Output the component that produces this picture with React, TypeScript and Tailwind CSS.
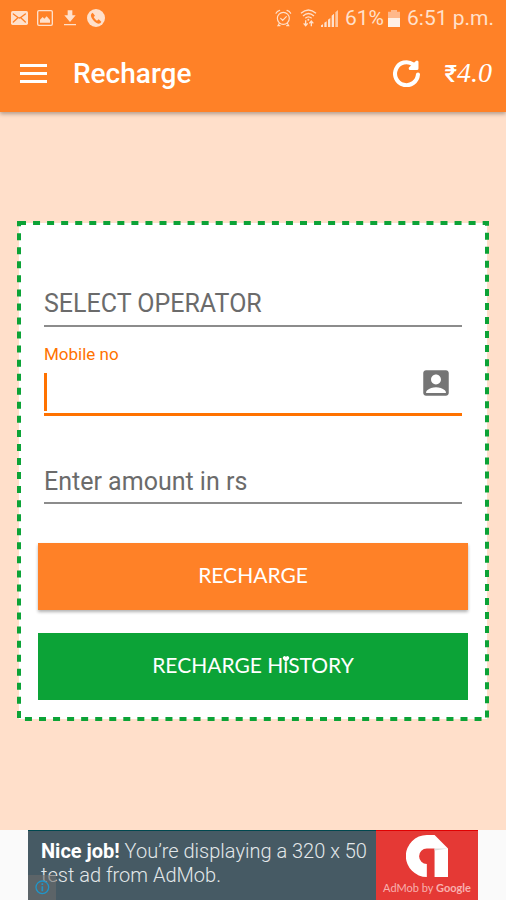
import React from "react";
import { MdAccountBox } from "react-icons/md";

function StatusBar() {
  return (
    <div className="flex items-center justify-between pl-[11px] pr-3 h-9 text-[#ffe0cb]">
      <div className="flex items-center gap-[9px]">
        {/* Mail */}
        <svg width="17" height="14" viewBox="0 0 51 42" aria-hidden="true">
          <rect width="51" height="42" rx="5" fill="currentColor" />
          <path
            d="M7 9 L20 19 Q25 23 30 19 L43 9 M7 33 L19 22 M43 33 L31 22"
            fill="none"
            stroke="#ff8127"
            strokeWidth="4"
            strokeLinecap="round"
          />
        </svg>
        {/* Picture */}
        <svg width="16" height="16" viewBox="0 0 48 48" aria-hidden="true">
          <rect x="2" y="2" width="44" height="44" rx="4" fill="none" stroke="currentColor" strokeWidth="4" />
          <path d="M9 38 V29 L17 21 L22 26 L29 19 L39 30 V38 Z" fill="currentColor" />
        </svg>
        {/* Download */}
        <svg width="16" height="16" viewBox="0 0 48 48" aria-hidden="true">
          <path d="M17 1 H31 V16 H41 L24 36 L7 16 H17 Z M6 42 H42 V46 H6 Z" fill="currentColor" />
        </svg>
        {/* Phone */}
        <svg width="18" height="18" viewBox="0 0 54 54" aria-hidden="true">
          <circle cx="27" cy="27" r="27" fill="currentColor" />
          <path
            d="M17 11 C11 15 10 19 14 27 C19 36 27 43 34 44 C38 44 42 41 43 38 L35 31 L30 35 C26 33 22 28 20 24 L24 20 Z"
            fill="#ff8127"
          />
        </svg>
      </div>

      <div className="flex items-center text-[21px] leading-6">
        {/* Alarm */}
        <svg width="17" height="18" viewBox="0 0 51 54" fill="none" stroke="currentColor" strokeWidth="3.5" strokeLinecap="round" aria-hidden="true">
          <circle cx="25" cy="28" r="18" />
          <path d="M17 28 L23 34 L34 23 M3 13 Q6 6 14 4 M47 13 Q44 6 36 4 M13 43 L9 50 H15 M37 43 L41 50 H35" />
        </svg>
        {/* Wi-Fi */}
        <svg className="ml-2" width="17" height="18" viewBox="0 0 51 54" fill="none" stroke="currentColor" strokeWidth="4" aria-hidden="true">
          <path d="M3 13 Q25 -7 48 13 M9 21 Q25 6 42 21 M16 28 Q25 19 35 28" />
          <path d="M17 34 V49 M11 43 L17 50 L23 43 M34 52 V37 M28 43 L34 36 L40 43" />
          <circle cx="25" cy="32" r="3" fill="currentColor" stroke="none" />
        </svg>
        {/* Signal */}
        <svg className="ml-1" width="17" height="17" viewBox="0 0 51 51" fill="currentColor" aria-hidden="true">
          <path d="M0 51 V46 L6 43 V51 Z M10 51 V38 L17 34 V51 Z M21 51 V29 L28 24 V51 Z M32 51 V17 L39 11 V51 Z" />
          <path d="M43 51 V7 L51 0 V51 Z" opacity=".75" />
        </svg>
        <span className="ml-[7px]">61%</span>
        {/* Battery */}
        <svg className="ml-1" width="12" height="17" viewBox="0 0 36 51" aria-hidden="true">
          <path d="M9 0 H27 V5 H36 V51 H0 V5 H9 Z" fill="#ffb88a" />
          <path d="M0 24 H36 V51 H0 Z" fill="#fff0e5" />
        </svg>
        <span className="ml-[7px]">6:51 p.m.</span>
      </div>
    </div>
  );
}

function Header() {
  return (
    <header className="relative bg-[#ff8127] text-white h-28 shadow-[0_2px_4px_rgba(0,0,0,0.3)]">
      <StatusBar />
      <div className="flex items-center h-[74px] pl-5 pr-[14px]">
        <button type="button" aria-label="Menu" className="flex flex-col gap-[5px]">
          <span className="w-[27px] h-[3px] bg-white" />
          <span className="w-[27px] h-[3px] bg-white" />
          <span className="w-[27px] h-[3px] bg-white" />
        </button>
        <h1 className="ml-[26px] pt-[2px] flex-1 text-[28px] leading-8 font-medium">Recharge</h1>
        <button type="button" aria-label="Refresh">
          <svg width="27" height="27" viewBox="0 0 80 80" aria-hidden="true">
            <path d="M74 43 A34 34 0 1 1 60 13" fill="none" stroke="currentColor" strokeWidth="12" strokeLinecap="round" />
            <path d="M71 6 V25 H51 Z" fill="currentColor" stroke="currentColor" strokeWidth="9" strokeLinejoin="round" />
          </svg>
        </button>
        <p className="ml-6 flex items-baseline leading-8">
          <span className="text-2xl font-medium">₹</span>
          <span className="text-[28px] italic font-['Liberation_Serif',serif]">4.0</span>
        </p>
      </div>
    </header>
  );
}

function RechargeForm() {
  return (
    <form
      className="relative w-full mx-[17px] px-[21px] pt-[62px] pb-[21px]"
      onSubmit={(e) => e.preventDefault()}
    >
      {/* Stitched border */}
      <svg className="absolute inset-0 w-full h-full" aria-hidden="true">
        <rect
          x="2"
          y="2"
          className="w-[calc(100%-4px)] h-[calc(100%-4px)]"
          fill="#fff"
          stroke="#0ca337"
          strokeWidth="4"
          strokeDasharray="7 7.05"
        />
      </svg>

      <div className="relative flex flex-col">
        <div className="flex flex-col px-[6px]">
          <select
            aria-label="Operator"
            className="appearance-none h-11 w-full bg-transparent border-b-2 border-[#8c8c8c] text-[25px] text-[#6b6b6b] outline-none"
          >
            <option>SELECT OPERATOR</option>
          </select>

          <label htmlFor="mobile" className="mt-[17px] text-[17px] leading-5 text-[#ff7200]">
            Mobile no
          </label>
          <div className="relative flex items-center">
            <input
              id="mobile"
              type="tel"
              className="h-[52px] w-full bg-transparent border-b-3 border-[#ff7200] pr-12 text-[25px] caret-transparent outline-none"
            />
            <span className="absolute left-0 top-[9px] bottom-[5px] w-[3px] bg-[#ff7200]" />
            <button
              type="button"
              aria-label="Contacts"
              className="absolute right-[9px] top-[2px] text-[#757575]"
            >
              <MdAccountBox size={34} />
            </button>
          </div>

          <input
            type="text"
            aria-label="Amount"
            placeholder="Enter amount in rs"
            className="mt-11 h-11 w-full bg-transparent border-b-2 border-[#8c8c8c] text-[25px] placeholder:text-[#6b6b6b] outline-none"
          />
        </div>

        <button
          type="submit"
          className="mt-[39px] h-[67px] pb-1 bg-[#ff8127] text-white text-[21px] font-['Lato',sans-serif] shadow-[0_2px_3px_rgba(0,0,0,0.3)]"
        >
          RECHARGE
        </button>
        <button
          type="button"
          className="mt-[23px] h-[67px] pb-1 bg-[#0ca337] text-white text-[21px] font-['Lato',sans-serif]"
        >
          RECHARGE H
          <span className="relative">
            i
            {/* Heart over the dot */}
            <svg
              className="absolute top-1 left-1/2 -translate-x-1/2"
              width="7"
              height="6"
              viewBox="0 0 14 12"
              fill="currentColor"
              aria-hidden="true"
            >
              <path d="M7 12 L1 6 A3.5 3.5 0 0 1 7 2 A3.5 3.5 0 0 1 13 6 Z" />
            </svg>
          </span>
          STORY
        </button>
      </div>
    </form>
  );
}

function AdBanner() {
  return (
    <footer className="flex justify-center bg-[#fafafa]">
      <a href="#ad" className="relative flex w-[450px] h-[70px]">
        <div className="flex-1 bg-[#465a64] border-t border-[#00474f] pl-[13px] pt-2 text-xl leading-6 font-light text-[#e3e8ea] whitespace-nowrap">
          <strong className="font-bold text-white">Nice job!</strong> You’re displaying a 320 x 50
          <br />
          test ad from AdMob.
        </div>
        <div className="w-[102px] bg-[#e53935] border-t border-[#e00000] flex flex-col items-center pt-1">
          <svg width="42" height="42" viewBox="0 0 125 125" aria-hidden="true">
            <path
              d="M62 0 H85 L125 40 V125 H85 V40 H62 A23 23 0 0 0 62 86 V125 A62.5 62.5 0 0 1 62 0 Z"
              fill="#fff"
            />
            <path d="M85 40 H125 L85 46 Z" fill="#dcdcdc" />
          </svg>
          <span className="mt-[3px] text-[11px] leading-4 text-[#f8b0ae] font-['Lato',sans-serif] whitespace-nowrap">
            AdMob by <span className="font-bold">Google</span>
          </span>
        </div>
        {/* Ad info badge */}
        <span className="absolute left-0 bottom-0 w-7 h-[25px] bg-[#6b6b6b]/60 flex items-center justify-center">
          <svg width="15" height="15" viewBox="0 0 45 45" fill="none" stroke="#2095c8" strokeWidth="4" aria-hidden="true">
            <circle cx="22" cy="22" r="19" />
            <path d="M22 19 V34 M22 10 V15" strokeWidth="5" />
          </svg>
        </span>
      </a>
    </footer>
  );
}

export default function App() {
  return (
    <div className="min-h-screen flex flex-col bg-[#ffdfca] font-['Roboto','Noto_Sans',sans-serif]">
      <Header />
      <main className="flex-1 flex items-center">
        <RechargeForm />
      </main>
      <AdBanner />
    </div>
  );
}
